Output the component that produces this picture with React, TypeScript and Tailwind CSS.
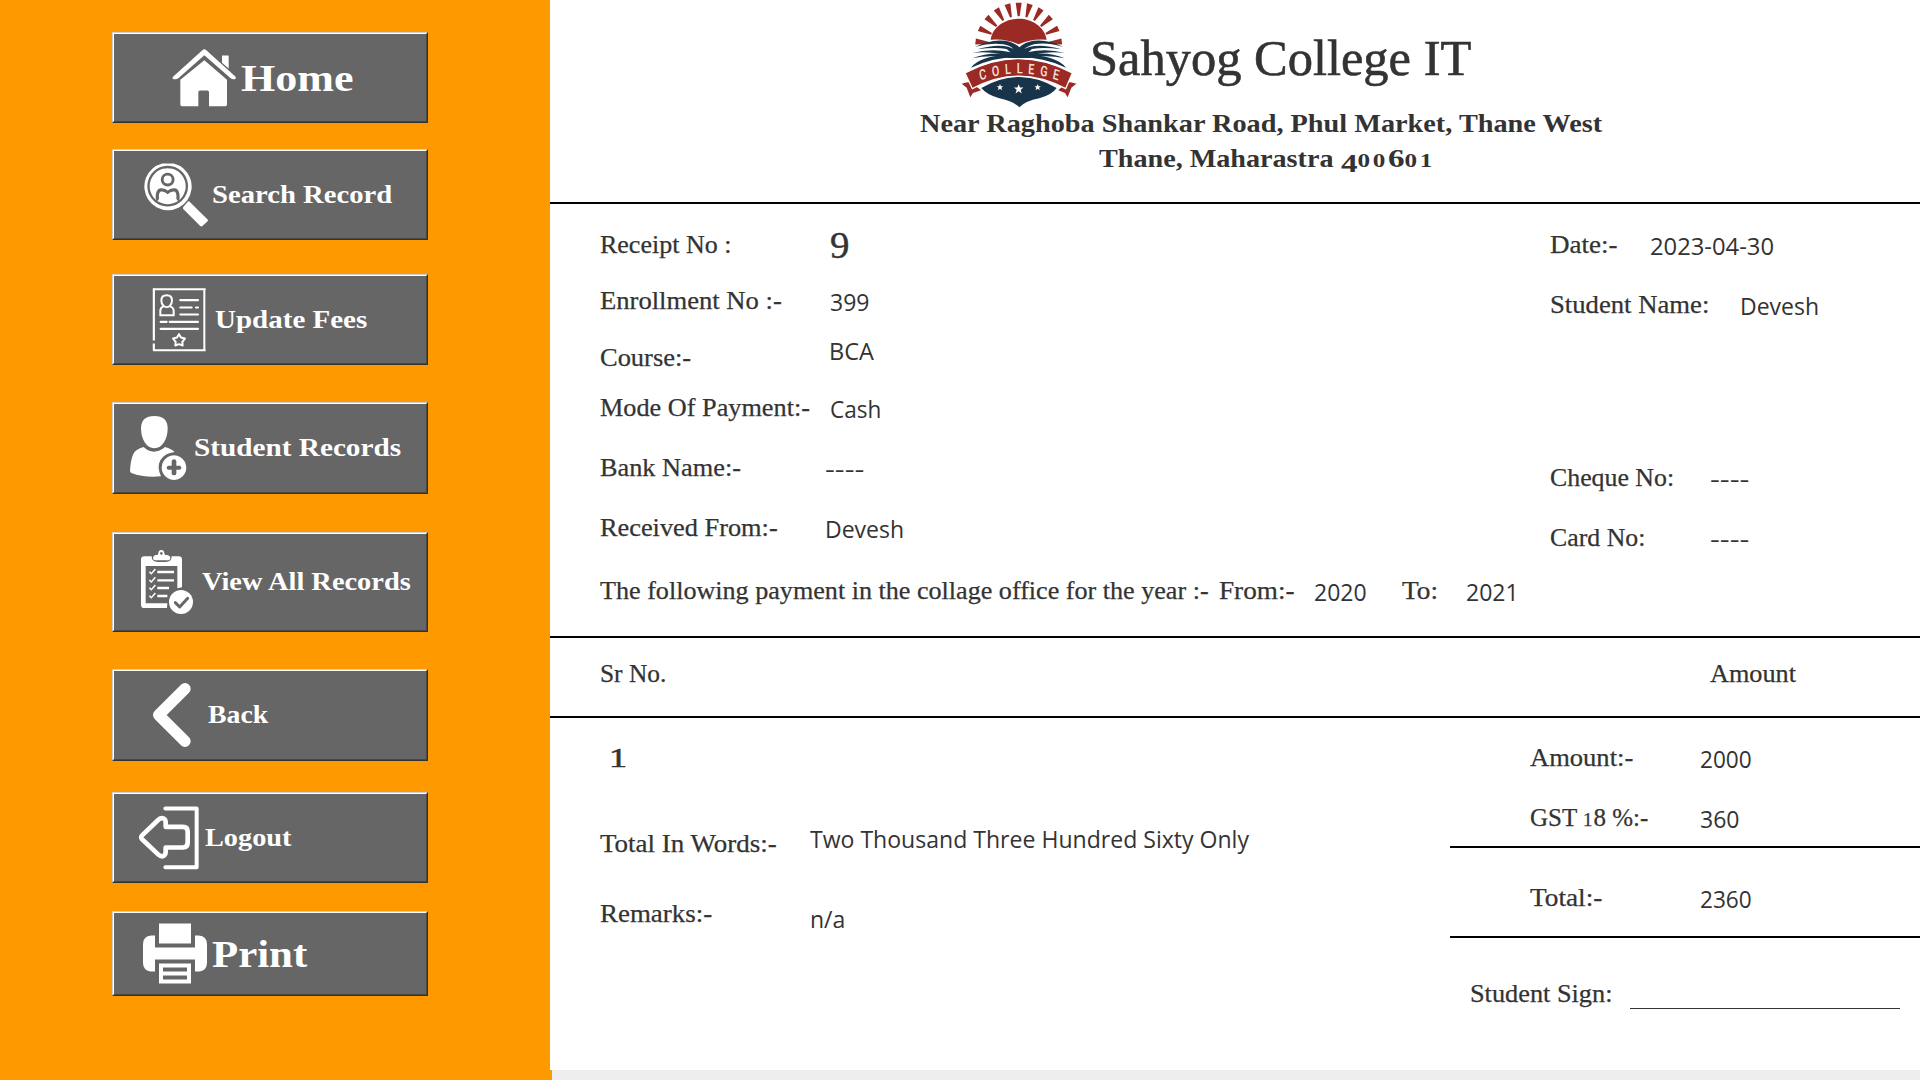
import { useLayoutEffect, useRef, useState, type ReactNode } from "react";

/* Text stretched horizontally so that it fills the width of its box. */
function Fit({ className, children }: { className: string; children: ReactNode }) {
  const box = useRef<HTMLSpanElement>(null);
  const text = useRef<HTMLSpanElement>(null);
  const [scale, setScale] = useState(1);
  useLayoutEffect(() => {
    if (box.current && text.current && text.current.offsetWidth) {
      setScale(box.current.offsetWidth / text.current.offsetWidth);
    }
  }, []);
  return (
    <span ref={box} className={`block shrink-0 whitespace-nowrap ${className}`}>
      <span ref={text} className="inline-block origin-left align-top" style={{ transform: `scaleX(${scale})` }}>
        {children}
      </span>
    </span>
  );
}

function Label({ className, children }: { className: string; children: ReactNode }) {
  return (
    <Fit className={`h-8 font-['Liberation_Serif',serif] text-[25px] leading-8 [-webkit-text-stroke:0.25px_#333] ${className}`}>
      {children}
    </Fit>
  );
}

function Value({ className, children }: { className: string; children: ReactNode }) {
  return <Fit className={`h-8 font-['Open_Sans',sans-serif] text-[23px] leading-[30px] ${className}`}>{children}</Fit>;
}

function Row({ className, children }: { className?: string; children: ReactNode }) {
  return <div className={`flex h-8 items-start ${className ?? ""}`}>{children}</div>;
}

function MenuButton({
  className,
  icon,
  viewBox,
  label,
  textClass,
}: {
  className: string;
  icon: ReactNode;
  viewBox: string;
  label: string;
  textClass: string;
}) {
  return (
    <button className="block w-[316px] border border-t-[#d0d0d0] border-r-[#333] border-b-[#333] border-l-[#d0d0d0]">
      <span
        className={`flex items-center border border-t-white border-r-[#474747] border-b-[#474747] border-l-white bg-[#666] text-white ${className}`}
      >
        <svg viewBox={viewBox} className="size-16 shrink-0" fill="#fff">
          {icon}
        </svg>
        <Fit className={`text-left font-['Liberation_Serif',serif] font-bold ${textClass}`}>{label}</Fit>
      </span>
    </button>
  );
}

const homeIcon = (
  <>
    <path d="M366 105h20v39l-20-17z" />
    <path d="M313 86q3 0 6 3l87 79q4 6-2 8-8 1-12-3l-79-69-78 69q-5 4-13 3-8-2-2-8l87-79q3-3 6-3z" />
    <path d="M313 119l68 59v74q0 5-5 5h-49v-42q0-5-5-5h-22q-5 0-5 5v42h-49q-5 0-5-5v-74z" />
  </>
);

const searchIcon = (
  <>
    <path
      fillRule="evenodd"
      d="M187 429h34a71 71 0 1 1-34 0zM203 436a61 61 0 1 0 .1 0z"
    />
    <path fillRule="evenodd" d="M203 443a54 54 0 1 0 .1 0zM203 457a20.500 20.500 0 1 1-.1 0zM172 542q-5-4-5-11 0-26 14-28 12-1 22 7 10-8 22-7 14 2 14 28 0 7-5 11l-5-7q2-19-6-22-10-2-20 8-10-10-20-8-8 3-6 22z" />
    <circle cx="203" cy="477" r="12" />
    <path d="M268 543l54 53q4 3 0 7l-14 13q-4 4-8 0l-51-51q-1-4 2-7l11-13q3-4 6-2z" />
  </>
);

const updateIcon = (
  <g fill="none" stroke="#fff" strokeWidth="6.500">
    <path d="M161.500 225V69M161.500 234v20" />
    <path d="M159 71.500h158M313 69v188M159 254.500h158" strokeWidth="6" />
    <path d="M181 149v-13q0-10 10-14-7-6-7-17 0-16 16-16t16 16q0 11-7 17 12 4 12 14v13z" strokeWidth="6" />
    <path d="M191 121q9 8 19 0" strokeWidth="5" />
    <path
      strokeLinecap="round"
      d="M241 104h53M241 126h34M288 126h6M241 147h53M182 169h18M209 169h85M182 190h112"
    />
    <path strokeWidth="6" strokeLinejoin="round" d="M237 206l6 10 12 3-8 10 1 11-11-4-11 4 1-11-8-10 12-3z" />
  </g>
);

const studentIcon = (
  <>
    <path d="M163 453c26 0 40 12 40 37 0 32-16 60-40 60s-40-28-40-60c0-25 14-37 40-37z" />
    <path d="M131 546q14 14 31 14t33-14q20 6 29 15-30 3-43 25-11 20 2 48-49 5-89-10-4-1-4-8 2-32 10-49 6-14 31-21z" />
    <path
      fillRule="evenodd"
      d="M222 571a37 37 0 1 1-.1 0zM215 588v14h-10q-5 1-5 6t5 6h10v12q1 5 7 5t7-5v-12h10q5-1 5-6t-5-6h-10v-14q-1-5-7-5t-7 5z"
    />
  </>
);

const viewIcon = (
  <>
    <path
      fillRule="evenodd"
      d="M133 109h22q0 17 18 17h24q18 0 18-17h21q10 0 10 10v83l-14 3v-67h-95v112h65l-1 14h-68q-10 0-10-10V119q0-10 10-10z"
    />
    <path
      fillRule="evenodd"
      d="M167 105h5q3-1 3-6 1-9 9-9t9 9q0 5 3 6h5q10 2 10 9t-10 7h-32q-10 0-10-7t8-9zM184 96a4 4 0 1 0 .1 0z"
    />
    <g fill="none" stroke="#fff" strokeWidth="7">
      <path d="M172 156h50M172 181h50M172 204h35M172 228h30" strokeLinecap="butt" />
      <path strokeWidth="4.500" d="M148 155l6 6 12-14M148 180l6 6 12-14M148 203l6 6 12-14M148 227l6 6 12-14" />
    </g>
    <circle cx="243" cy="246" r="36" />
    <path d="M226 248l13 13 24-26" fill="none" stroke="#666" strokeWidth="9" strokeLinecap="round" strokeLinejoin="round" />
  </>
);

const backIcon = (
  <path
    d="M255 506l-79 79 79 79"
    fill="none"
    stroke="#fff"
    strokeWidth="34"
    strokeLinecap="round"
    strokeLinejoin="round"
  />
);

const logoutIcon = (
  <g fill="none" stroke="#fff" strokeLinecap="round" strokeLinejoin="round">
    <path strokeWidth="12" d="M196 84h94v176h-94" />
    <path
      strokeWidth="14"
      d="M127 164l49-47q8-7 15-3 6 3 6 12v13h52q14 0 14 14v34q0 14-14 14h-52v13q0 9-6 12-7 4-15-3l-49-46q-7-7 0-13z"
    />
  </g>
);

const printIcon = (
  <>
    <path d="M177 429h96v60h-96z" />
    <path d="M154 465h11v36h120v-36h11q25 2 25 27v55q0 22-22 26h-14v-36H165v36h-14q-22-4-22-26v-55q0-25 25-27z" />
    <path fillRule="evenodd" d="M177 549h96v60h-96zM189 561v12h72v-12zM189 585v12h72v-12z" />
  </>
);

const rays = [-84, -66, -48, -31, -15, 0, 15, 31, 48, 66, 84];

function Logo() {
  return (
    <svg viewBox="60 0 354 324" className="h-[108px] w-[118px] shrink-0">
      <g fill="#9c2a24">
        {rays.map((a) => (
          <path key={a} d="M227 8h18l-6 41h-6z" transform={`rotate(${a} 236 138)`} />
        ))}
        <path d="M152 119C158 80 196 56 236 56s78 24 84 63q-46-4-84 14-38-18-84-14z" />
      </g>
      <path fill="#fff" d="M140 134q30-20 96 2 66-22 98-2v30H140z" />
      <g fill="#17344a">
        <path d="M105 141Q150 117 195 122Q222 126 238 142Q254 126 281 122Q326 117 370 141Q320 126 282 133Q262 138 252 149L262 157Q320 144 374 159Q320 153 275 166H200Q150 153 97 159Q155 144 212 157L222 149Q210 136 190 133Q150 127 105 141z" />
        <path d="M112 148Q165 132 205 140Q222 144 238 160Q252 144 270 140Q310 132 364 148Q310 141 276 147L252 168H224L200 147Q165 141 112 148z" />
        <path d="M97 175Q150 154 210 164H266Q325 154 374 175Q320 163 268 174H206Q150 163 97 175z" />
        <path d="M93 203Q120 168 200 166H270Q350 168 378 203Q310 171 236 171T93 203z" />
        <path d="M124 264q114-66 226 0-14 20-52 31-42 8-60 27-18-19-60-27-38-11-54-31z" />
      </g>
      <g fill="#9c2a24">
        <path d="M82 247l-17 4 15 12 11 29 8-13 24-8-30-24zM392 247l17 4-15 12-11 29-8-13-20-8 26-24z" />
        <path d="M75 219Q236 133 397 219l-20 47Q236 191 97 266z" stroke="#fff" strokeWidth="4" />
      </g>
      <g transform="scale(.75 1)">
        <path id="ribbon" d="M161 242Q315 198 474 242" fill="none" />
        <text fill="#f7e6df" fontSize="43" fontWeight="500" fontFamily="Roboto, sans-serif">
          <textPath href="#ribbon" textLength="316" lengthAdjust="spacing">
            COLLEGE
          </textPath>
        </text>
      </g>
      <g fill="#fff">
        {[
          [180, 262, 0.75],
          [236, 267, 1.1],
          [293, 262, 0.75],
        ].map(([x, y, s]) => (
          <path
            key={x}
            transform={`translate(${x} ${y}) scale(${s})`}
            d="M0-13l3.500 9H13l-7.500 6L8.500 12 0 6l-8.500 6 3-10L-13-4h9.500z"
          />
        ))}
      </g>
    </svg>
  );
}

export default function App() {
  return (
    <div className="flex h-[1080px] w-[1920px] overflow-hidden bg-[#f90] text-[#333]">
      <nav className="flex w-[550px] shrink-0 flex-col pt-8 pl-28">
        <MenuButton className="h-[89px] pl-[58px]" viewBox="216 76.5 192 192" icon={homeIcon} label="Home" textClass="mt-0.5 ml-[5px] w-[113px] text-[37px] leading-[48px]" />
        <div className="h-[26px]" />
        <MenuButton className="h-[89px] pl-[30px]" viewBox="132 427.5 192 192" icon={searchIcon} label="Search Record" textClass="ml-1 w-[180px] text-[25px] leading-8" />
        <div className="h-[34px]" />
        <MenuButton className="h-[89px] pl-[33px]" viewBox="141 67.5 192 192" icon={updateIcon} label="Update Fees" textClass="ml-1 w-[152px] text-[25px] leading-8" />
        <div className="h-[37px]" />
        <MenuButton className="h-[90px] pl-3" viewBox="78 453 192 192" icon={studentIcon} label="Student Records" textClass="ml-1 w-[207px] text-[25px] leading-8" />
        <div className="h-[38px]" />
        <MenuButton className="h-[98px] pl-[21px]" viewBox="105 90 192 192" icon={viewIcon} label="View All Records" textClass="ml-[3px] w-[209px] text-[25px] leading-8" />
        <div className="h-[37px]" />
        <MenuButton className="h-[90px] pl-[26px]" viewBox="120 489 192 192" icon={backIcon} label="Back" textClass="ml-1 w-[60px] text-[25px] leading-8" />
        <div className="h-[31px]" />
        <MenuButton className="h-[89px] pl-[23px]" viewBox="111 76.5 192 192" icon={logoutIcon} label="Logout" textClass="ml-1 w-[86px] text-[25px] leading-8" />
        <div className="h-7" />
        <MenuButton className="h-[83px] pl-[29px]" viewBox="129 424.5 192 192" icon={printIcon} label="Print" textClass="mt-0.5 ml-[5px] w-[95px] text-[37px] leading-[48px]" />
      </nav>

      <main className="flex w-[1370px] flex-col">
        <div className="h-[1070px] bg-white">
          <header className="h-[204px] border-b-2 border-black">
            <div className="flex h-[108px] items-start pl-[410px]">
              <Logo />
              <Fit className="mt-7 ml-3 w-[381px] font-['Liberation_Serif',serif] text-[51px] leading-[60px] [-webkit-text-stroke:0.6px_#333]">
                Sahyog College IT
              </Fit>
            </div>
            <div className="font-['Liberation_Serif',serif] text-[25px] leading-[35px] font-bold">
              <Fit className="-mt-0.5 ml-[370px] w-[682px]">Near Raghoba Shankar Road, Phul Market, Thane West</Fit>
              <div className="flex h-[35px] pl-[549px]">
                <Fit className="w-[242px]">Thane, Maharastra&nbsp;</Fit>
                <Fit className="w-[94px]">
                  <span className="relative top-[5px]">4</span>
                  <span className="text-[19px] tracking-[2px]">00</span>6<span className="text-[19px] tracking-[2px]">01</span>
                </Fit>
              </div>
            </div>
          </header>

          <section className="h-[434px] border-b-2 border-black pt-[25px] pl-[50px]">
            <div className="flex">
              <div className="w-[950px]">
                <Row>
                  <Label className="w-[131px]">Receipt No :</Label>
                  <Fit className="ml-[99px] w-[20px] font-['Liberation_Serif',serif] text-[37px] leading-[34px] [-webkit-text-stroke:0.4px_#333]">9</Fit>
                </Row>
                <Row className="mt-6">
                  <Label className="w-[182px]">Enrollment No :-</Label>
                  <Value className="mt-0.5 ml-12 w-[39px]">399</Value>
                </Row>
                <Row className="mt-[25px]">
                  <Label className="w-[91px]">Course:-</Label>
                  <Value className="-mt-1.5 ml-[138px] w-[45px]">BCA</Value>
                </Row>
                <Row className="mt-[18px]">
                  <Label className="w-[210px]">Mode Of Payment:-</Label>
                  <Value className="mt-0.5 ml-5 w-[51px]">Cash</Value>
                </Row>
                <Row className="mt-7">
                  <Label className="w-[141px]">Bank Name:-</Label>
                  <Value className="mt-0.5 ml-[84px] w-[40px]">----</Value>
                </Row>
                <Row className="mt-7">
                  <Label className="w-[178px]">Received From:-</Label>
                  <Value className="mt-0.5 ml-[47px] w-[79px]">Devesh</Value>
                </Row>
              </div>
              <div>
                <Row>
                  <Label className="w-[67px]">Date:-</Label>
                  <Value className="mt-0.5 ml-[33px] w-[124px]">2023-04-30</Value>
                </Row>
                <Row className="mt-7">
                  <Label className="w-[159px]">Student Name:</Label>
                  <Value className="mt-0.5 ml-[31px] w-[79px]">Devesh</Value>
                </Row>
                <Row className="mt-[141px]">
                  <Label className="w-[124px]">Cheque No:</Label>
                  <Value className="mt-0.5 ml-9 w-[40px]">----</Value>
                </Row>
                <Row className="mt-7">
                  <Label className="w-[95px]">Card No:</Label>
                  <Value className="mt-0.5 ml-[65px] w-[40px]">----</Value>
                </Row>
              </div>
            </div>
            <Row className="mt-[21px]">
              <Label className="w-[609px]">The following payment in the collage office for the year :-</Label>
              <Label className="ml-[10px] w-[75px]">From:-</Label>
              <Value className="mt-0.5 ml-5 w-[53px]">2020</Value>
              <Label className="ml-[35px] w-[36px]">To:</Label>
              <Value className="mt-0.5 ml-7 w-[53px]">2021</Value>
            </Row>
          </section>

          <section className="h-20 border-b-2 border-black pt-5 pl-[50px]">
            <Row>
              <Label className="w-[66px]">Sr No.</Label>
              <Label className="ml-[1044px] w-[86px]">Amount</Label>
            </Row>
          </section>

          <section className="flex h-[352px]">
            <div className="w-[900px] pt-6 pl-[50px]">
              <Row>
                <Fit className="ml-[9px] w-[18px] font-['Liberation_Serif',serif] text-[28px] leading-8 [-webkit-text-stroke:0.6px_#333]">1</Fit>
              </Row>
              <Row className="mt-[54px]">
                <Label className="w-[177px]">Total In Words:-</Label>
                <Value className="-mt-1 ml-[33px] w-[439px]">Two Thousand Three Hundred Sixty Only</Value>
              </Row>
              <Row className="mt-[38px]">
                <Label className="w-[112px]">Remarks:-</Label>
                <Value className="mt-1.5 ml-[98px] w-[35px]">n/a</Value>
              </Row>
            </div>
            <div className="w-[470px]">
              <div className="h-[130px] border-b-2 border-black pt-6 pl-20">
                <Row>
                  <Label className="w-[103px]">Amount:-</Label>
                  <Value className="mt-0.5 ml-[67px] w-[52px]">2000</Value>
                </Row>
                <Row className="mt-7">
                  <Label className="w-[118px]">
                    GST <span className="text-[19px] tracking-[1px]">1</span>8 %:-
                  </Label>
                  <Value className="mt-0.5 ml-[52px] w-[39px]">360</Value>
                </Row>
              </div>
              <div className="h-[90px] border-b-2 border-black pt-[34px] pl-20">
                <Row>
                  <Label className="w-[72px]">Total:-</Label>
                  <Value className="mt-0.5 ml-[98px] w-[52px]">2360</Value>
                </Row>
              </div>
              <Row className="mt-10 pl-5">
                <Label className="w-[142px]">Student Sign:</Label>
                <div className="ml-[18px] h-[31px] w-[270px] border-b border-[#333]" />
              </Row>
            </div>
          </section>
        </div>
        <div className="ml-0.5 h-2.5 bg-[#eee]" />
      </main>
    </div>
  );
}
